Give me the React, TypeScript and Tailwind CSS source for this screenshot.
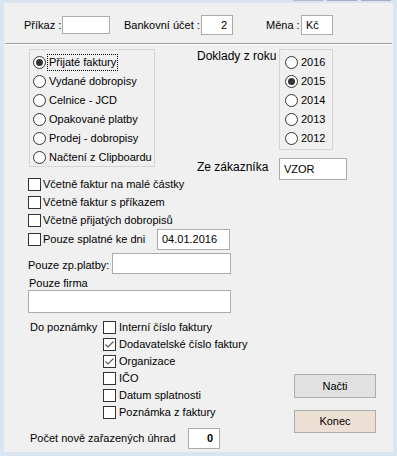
import React from "react";

const font = { fontFamily: '"Liberation Sans", Arial, sans-serif' };

function Radio({ checked, label, focus }: { checked?: boolean; label: string; focus?: boolean }) {
  return (
    <div className="flex items-center h-[19px] whitespace-nowrap">
      <span className="w-[13px] h-[13px] rounded-full border border-[#333333] bg-white flex items-center justify-center shrink-0">
        {checked && <span className="w-[7px] h-[7px] rounded-full bg-[#333333]" />}
      </span>
      {focus ? (
        <span className="ml-[1px] px-[1px] border border-dotted border-black leading-[15px]">{label}</span>
      ) : (
        <span className="ml-[3px]">{label}</span>
      )}
    </div>
  );
}

function Check({ checked }: { checked?: boolean }) {
  return (
    <span className="w-[13px] h-[13px] border border-[#333333] bg-white shrink-0 flex items-center justify-center">
      {checked && (
        <svg width="11" height="11" viewBox="0 0 11 11">
          <path d="M1.5 5.5 L4 8 L9.5 2.5" fill="none" stroke="#555555" strokeWidth="1.1" />
        </svg>
      )}
    </span>
  );
}

function Box({ className = "", children }: { className?: string; children?: React.ReactNode }) {
  return <div className={`bg-white border border-[#ababab] flex items-center shrink-0 ${className}`}>{children}</div>;
}

export default function App() {
  const types = ["Přijaté faktury", "Vydané dobropisy", "Celnice - JCD", "Opakované platby", "Prodej - dobropisy", "Načtení z Clipboardu"];
  const years = ["2016", "2015", "2014", "2013", "2012"];
  const flags = ["Včetně faktur na malé částky", "Včetně faktur s příkazem", "Včetně přijatých dobropisů"];
  const notes: [string, boolean][] = [
    ["Interní číslo faktury", false],
    ["Dodavatelské číslo faktury", true],
    ["Organizace", true],
    ["IČO", false],
    ["Datum splatnosti", false],
    ["Poznámka z faktury", false],
  ];

  return (
    <div className="w-[397px] h-[456px] bg-[#dae5f2] flex flex-col text-[11px] text-black whitespace-nowrap" style={font}>
      {/* remnants of the title bar buttons */}
      <div className="h-[3px] flex justify-end gap-[4px] pr-[6px]">
        <span className="w-[30px] h-[1px] bg-[#b4bac6]" />
        <span className="w-[30px] h-[1px] bg-[#a7adc4]" />
        <span className="w-[30px] h-[1px] bg-[#a7adc4]" />
      </div>

      <div className="mx-[4px] mb-[4px] flex-1 bg-[#f0f0f0] flex flex-col">
        {/* top row */}
        <div className="mt-[12px] h-[20px] flex items-center pl-[20px]">
          <span className="w-[38px] shrink-0 text-right pr-[1px]">Příkaz :</span>
          <Box className="w-[48px] h-[18px]" />
          <span className="ml-[14px] w-[77px] shrink-0">Bankovní účet :</span>
          <Box className="w-[32px] h-[20px] justify-end pr-[5px]">2</Box>
          <span className="ml-[33px] w-[35px] shrink-0">Měna :</span>
          <Box className="w-[32px] h-[20px] pl-[4px]">Kč</Box>
        </div>

        <div className="mt-[8px] mx-[1px] h-px bg-[#a0a0a0]" />
        <div className="mx-[1px] h-px bg-white" />

        {/* document type + year */}
        <div className="mt-[4px] flex items-start pl-[25px]">
          <div className="w-[126px] h-[118px] border border-[#d5d5d5] pl-[3px] pt-[3px] shrink-0">
            {types.map((t, i) => (
              <Radio key={t} label={t} checked={i === 0} focus={i === 0} />
            ))}
          </div>
          <div className="ml-[42px] flex flex-col">
            <div className="flex items-start">
              <span className="w-[82px] shrink-0 text-[12px] leading-[14px]">
                Doklady z roku<span className="text-[#ead7a8]"> :</span>
              </span>
              <div className="w-[54px] h-[101px] border border-[#d5d5d5] pl-[5px] pt-[3px] shrink-0">
                {years.map((y) => (
                  <Radio key={y} label={y} checked={y === "2015"} />
                ))}
              </div>
            </div>
            <div className="mt-[8px] flex items-start">
              <span className="w-[82px] shrink-0 pt-[2px] text-[12px] leading-[14px]">Ze zákazníka</span>
              <Box className="w-[68px] h-[22px] pl-[4px]">VZOR</Box>
            </div>
          </div>
        </div>

        {/* filters */}
        <div className="-mt-[5px] pl-[24px] flex flex-col">
          {flags.map((f) => (
            <div key={f} className="h-[18px] flex items-center">
              <Check />
              <span className="ml-[2px]">{f}</span>
            </div>
          ))}
          <div className="h-[21px] flex items-center">
            <Check />
            <span className="ml-[2px] w-[114px] shrink-0">Pouze splatné ke dni</span>
            <Box className="w-[73px] h-[21px] pl-[4px]">04.01.2016</Box>
          </div>
          <div className="mt-[3px] h-[21px] flex items-center">
            <span className="w-[84px] shrink-0 pt-[3px]">Pouze zp.platby:</span>
            <Box className="w-[119px] h-[21px]" />
          </div>
          <div className="mt-[3px] leading-[13px] pl-[1px]">Pouze firma</div>
          <Box className="w-[203px] h-[23px]" />
        </div>

        {/* notes + buttons */}
        <div className="mt-[6px] pl-[25px] flex items-start">
          <div className="w-[265px] shrink-0 flex flex-col">
            <div className="flex items-start">
              <span className="w-[74px] shrink-0 h-[17px] flex items-center pl-[1px]">Do poznámky</span>
              <div className="flex flex-col">
                {notes.map(([n, c]) => (
                  <div key={n} className="h-[17px] flex items-center">
                    <Check checked={c} />
                    <span className="ml-[3px]">{n}</span>
                  </div>
                ))}
              </div>
            </div>
            <div className="mt-[7px] h-[21px] flex items-center">
              <span className="w-[159px] shrink-0 pl-[1px]">Počet nově zařazených úhrad</span>
              <Box className="w-[32px] h-[21px] justify-end pr-[6px] font-bold">0</Box>
            </div>
          </div>
          <div className="mt-[55px] flex flex-col">
            <button className="w-[82px] h-[24px] bg-[#e1e1e1] border border-[#adadad] text-[11px]">Načti</button>
            <button className="mt-[12px] w-[82px] h-[23px] bg-[#ecdfd4] border border-[#adadad] text-[11px]">Konec</button>
          </div>
        </div>
      </div>
    </div>
  );
}
